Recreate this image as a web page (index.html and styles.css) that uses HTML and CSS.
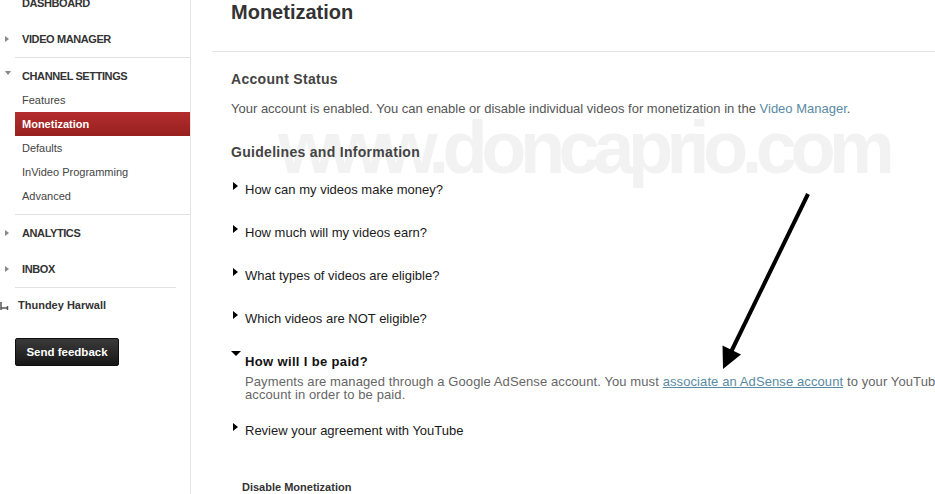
FILE: index.html
```html
<!DOCTYPE html>
<html>
<head>
<meta charset="utf-8">
<link rel="stylesheet" href="styles.css">
</head>
<body>
<div class="page">
  <aside class="sidebar">
    <div class="nav-head nav-head-top">DASHBOARD</div>
    <div class="nav-head"><span class="tri tri-right"></span>VIDEO MANAGER</div>
    <div class="sep"></div>
    <div class="nav-head nav-head-open"><span class="tri tri-down"></span>CHANNEL SETTINGS</div>
    <ul class="sub">
      <li>Features</li>
      <li class="active">Monetization</li>
      <li>Defaults</li>
      <li>InVideo Programming</li>
      <li>Advanced</li>
    </ul>
    <div class="sep"></div>
    <div class="nav-head"><span class="tri tri-right"></span>ANALYTICS</div>
    <div class="nav-head"><span class="tri tri-right"></span>INBOX</div>
    <div class="sep sep-short"></div>
    <div class="user">
      <svg class="user-icon" width="9" height="10" viewBox="0 0 9 10"><path d="M1 1v8M1 7h7M7.5 5v4" stroke="#555" stroke-width="1.5" fill="none"/></svg>
      <span>Thundey Harwall</span>
    </div>
    <button class="feedback">Send feedback</button>
  </aside>
  <main class="main">
    <div class="main-head"><h1>Monetization</h1></div>
    <div class="content">
      <h2 class="h-status">Account Status</h2>
      <p class="status">Your account is enabled. You can enable or disable individual videos for monetization in the <a class="link">Video Manager</a>.</p>
      <h2 class="h-guide">Guidelines and Information</h2>
      <ul class="faq">
        <li><span class="arrow-r"></span>How can my videos make money?</li>
        <li><span class="arrow-r"></span>How much will my videos earn?</li>
        <li><span class="arrow-r"></span>What types of videos are eligible?</li>
        <li><span class="arrow-r"></span>Which videos are NOT eligible?</li>
        <li class="open"><span class="arrow-d"></span><strong>How will I be paid?</strong>
          <p class="answer">Payments are managed through a Google AdSense account. You must <a class="link ul">associate an AdSense account</a> to your YouTube<br>account in order to be paid.</p>
        </li>
        <li><span class="arrow-r"></span>Review your agreement with YouTube</li>
      </ul>
      <h3 class="disable">Disable Monetization</h3>
    </div>
  </main>
  <div class="watermark">www.doncaprio.com</div>
  <svg class="annot" width="935" height="494" viewBox="0 0 935 494">
    <line x1="808" y1="194" x2="731" y2="352" stroke="#000" stroke-width="4"/>
    <polygon points="723,369 722.5,345.5 741,354.5" fill="#000"/>
  </svg>
</div>
</body>
</html>
```
FILE: styles.css
```css
html, body {
  margin: 0;
  padding: 0;
  background: #fff;
}
body {
  font-family: "Liberation Sans", Arial, sans-serif;
  width: 935px;
  height: 494px;
  overflow: hidden;
}
.page {
  position: relative;
  display: flex;
  width: 935px;
  height: 494px;
}
.sidebar {
  flex: none;
  border-right: 1px solid #e4e4e4;
  box-sizing: border-box;
  width: 191px;
}
.nav-head {
  position: relative;
  padding: 6px 0 6px 22px;
  line-height: 24px;
  height: 24px;
  font-size: 11px;
  font-weight: bold;
  color: #333;
  letter-spacing: -0.4px;
}
.nav-head-top {
  margin-top: -15px;
}
.nav-head-open {
  padding-bottom: 0;
}
.tri {
  position: absolute;
  left: 5px;
  top: 50%;
  width: 0;
  height: 0;
}
.tri-right {
  margin-top: -3px;
  border-left: 4px solid #888;
  border-top: 3px solid transparent;
  border-bottom: 3px solid transparent;
}
.tri-down {
  margin-top: -2px;
  border-top: 4px solid #888;
  border-left: 3px solid transparent;
  border-right: 3px solid transparent;
}
.sep {
  margin-left: 15px;
  height: 1px;
  background: #e2e2e2;
}
.sep-short {
  margin-right: 14px;
}
.sub {
  list-style: none;
  margin: 0;
  padding: 0 0 6px 15px;
}
.sub li {
  height: 24px;
  line-height: 24px;
  padding-left: 7px;
  font-size: 11px;
  color: #444;
}
.sub li.active {
  background: linear-gradient(#b32d2e, #97201f);
  color: #fff;
  font-weight: bold;
}
.user {
  display: flex;
  align-items: center;
  height: 36px;
  margin-top: -1px;
  font-size: 11px;
  font-weight: bold;
  color: #333;
}
.user-icon {
  margin-right: 9px;
  margin-top: 1px;
}
.feedback {
  display: block;
  margin: 15px 0 0 15px;
  width: 104px;
  height: 28px;
  padding: 0;
  border: 1px solid #0e0e0e;
  border-radius: 2px;
  background: linear-gradient(#3a3a3a, #171717);
  color: #fff;
  font-family: "Liberation Sans", Arial, sans-serif;
  font-size: 11.5px;
  font-weight: bold;
}
.main {
  flex: 1;
  min-width: 0;
  position: relative;
  z-index: 1;
}
.main-head {
  margin-left: 21px;
  padding-left: 19px;
  height: 51px;
  border-bottom: 1px solid #e3e3e3;
}
h1 {
  margin: 0;
  font-size: 20px;
  line-height: 24px;
  color: #333;
}
.content {
  padding-left: 40px;
}
h2 {
  margin: 0;
  font-size: 14px;
  line-height: 20px;
  letter-spacing: 0.3px;
  color: #444;
}
.h-status {
  margin-top: 17px;
}
.status {
  margin: 12px 0 0;
  font-size: 13px;
  line-height: 16px;
  color: #555;
  white-space: nowrap;
}
.link {
  color: #5a8aa3;
}
.link.ul {
  text-decoration: underline;
}
.h-guide {
  margin-top: 25px;
}
.faq {
  list-style: none;
  margin: 20px 0 0;
  padding: 0;
}
.faq li {
  position: relative;
  padding-left: 14px;
  font-size: 13px;
  line-height: 16px;
  color: #1a1a1a;
  margin-bottom: 27px;
  white-space: nowrap;
}
.faq li:first-child {
  margin-top: 1px;
}
.faq li.open {
  margin-bottom: 22px;
}
.faq strong {
  font-size: 13px;
  letter-spacing: 0.35px;
  color: #111;
}
.arrow-r {
  position: absolute;
  left: 2px;
  top: 0;
  width: 0;
  height: 0;
  border-left: 5px solid #000;
  border-top: 4px solid transparent;
  border-bottom: 4px solid transparent;
}
.arrow-d {
  position: absolute;
  left: 0;
  top: -3px;
  width: 0;
  height: 0;
  border-top: 5px solid #000;
  border-left: 5px solid transparent;
  border-right: 5px solid transparent;
}
.answer {
  margin: 5px 0 0;
  font-size: 13px;
  line-height: 13px;
  letter-spacing: 0.1px;
  color: #666;
}
.disable {
  margin: 42px 0 0 11px;
  font-size: 11px;
  line-height: 12px;
  color: #333;
}
.watermark {
  position: absolute;
  left: 278px;
  top: 112px;
  font-size: 74px;
  line-height: 72px;
  font-weight: bold;
  letter-spacing: -6.5px;
  color: #f2f2f2;
  white-space: nowrap;
  z-index: 0;
}
.annot {
  position: absolute;
  left: 0;
  top: 0;
  z-index: 2;
  pointer-events: none;
}
```
